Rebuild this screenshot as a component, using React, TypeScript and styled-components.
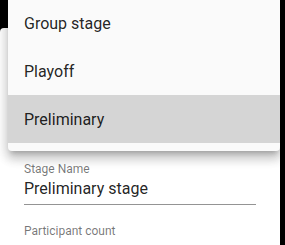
import React from "react";
import styled, { createGlobalStyle } from "styled-components";

const Global = createGlobalStyle`
  html, body { margin: 0; padding: 0; background: #000; }
  body { font-family: Roboto, "Noto Sans", sans-serif; overflow: hidden; }
  #root { width: 285px; height: 245px; }
`;

const Page = styled.div`
  position: relative;
  width: 285px;
  height: 245px;
  overflow: hidden;
  background: #000;
`;

const Dialog = styled.div`
  margin-top: 28px;
  width: 280px;
  height: 240px;
  background: #fff;
  border-top-left-radius: 4px;
  box-sizing: border-box;
  padding: 134px 24px 0 24px;
  display: flex;
  flex-direction: column;
`;

const Field = styled.div`
  display: flex;
  flex-direction: column;
  width: 232px;
`;

const Label = styled.label`
  font-size: 12px;
  line-height: 14px;
  color: rgba(0, 0, 0, 0.54);
`;

const InputText = styled.div`
  font-size: 16px;
  line-height: 24px;
  color: rgba(0, 0, 0, 0.87);
  padding-top: 1px;
  padding-bottom: 3px;
  border-bottom: 1px solid rgba(0, 0, 0, 0.42);
`;

const NextField = styled(Field)`
  margin-top: 19px;
`;

const Menu = styled.ul`
  position: absolute;
  top: -9px;
  left: 8px;
  width: 272px;
  margin: 0;
  padding: 8px 0;
  list-style: none;
  background: #fafafa;
  border-radius: 4px;
  box-shadow: 0px 5px 5px -3px rgba(0, 0, 0, 0.2),
    0px 8px 10px 1px rgba(0, 0, 0, 0.14), 0px 3px 14px 2px rgba(0, 0, 0, 0.12);
`;

const Item = styled.li<{ $selected?: boolean }>`
  height: 48px;
  box-sizing: border-box;
  padding: 2px 16px 0;
  display: flex;
  align-items: center;
  font-size: 16px;
  line-height: 24px;
  color: rgba(0, 0, 0, 0.87);
  background: ${(p) => (p.$selected ? "#d5d5d5" : "transparent")};
`;

const items = ["Group stage", "Playoff", "Preliminary"];

export default function App() {
  return (
    <>
      <Global />
      <Page>
        <Dialog>
          <Field>
            <Label>Stage Name</Label>
            <InputText>Preliminary stage</InputText>
          </Field>
          <NextField>
            <Label>Participant count</Label>
          </NextField>
        </Dialog>
        <Menu>
          {items.map((it) => (
            <Item key={it} $selected={it === "Preliminary"}>
              {it}
            </Item>
          ))}
        </Menu>
      </Page>
    </>
  );
}
